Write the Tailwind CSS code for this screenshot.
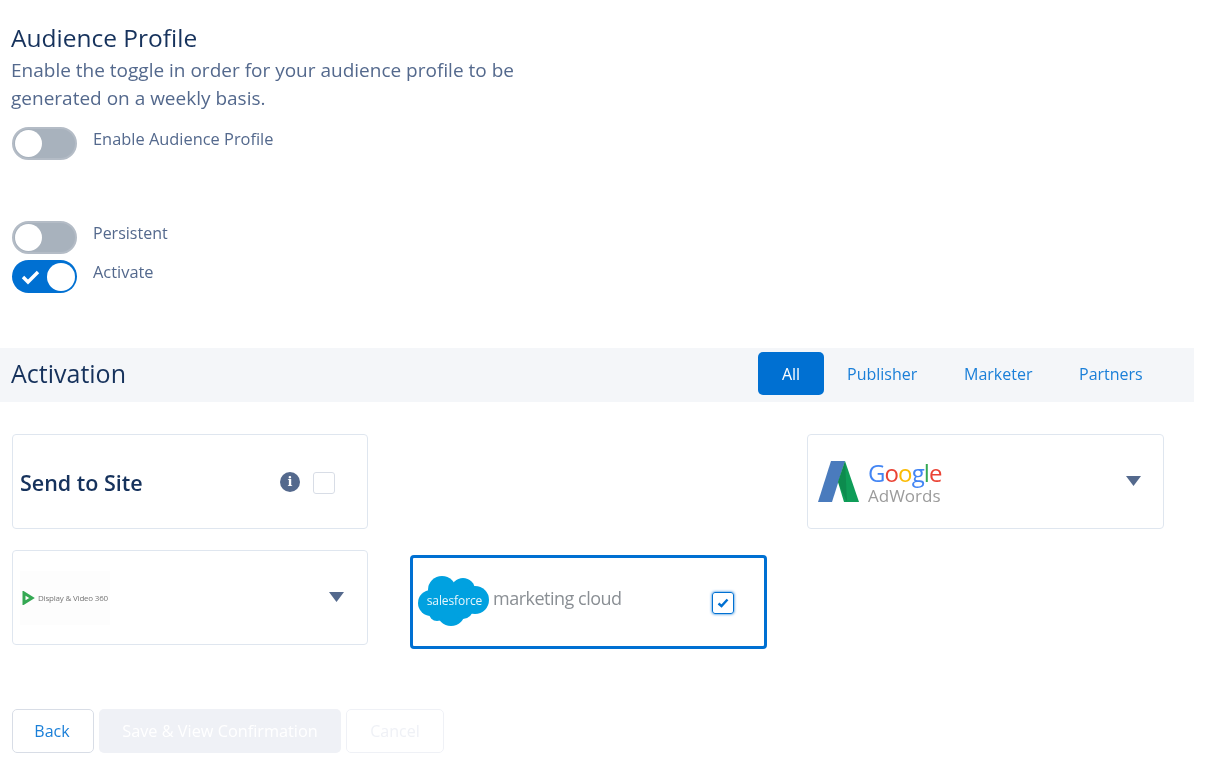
<!DOCTYPE html>
<html>
<head>
<meta charset="utf-8">
<script src="https://cdn.jsdelivr.net/npm/@tailwindcss/browser@4"></script>
</head>
<body class="bg-white font-['Open_Sans',sans-serif] text-[#54698d]">
<div class="w-[1206px] h-[764px] overflow-hidden blur-[0.4px]">
  <div class="pl-3 pt-[23px] h-[348px]">
    <h1 class="text-[24.5px] leading-[30px] text-[#16325c] -ml-[1px]">Audience Profile</h1>
    <p class="w-[530px] mt-[3px] text-[19px] leading-[28px] -ml-[1px]">Enable the toggle in order for your audience profile to be generated on a weekly basis.</p>
    <div class="flex gap-[16px] mt-[15px] h-[33px]">
      <div class="w-[65px] h-[33px] rounded-full bg-[#a8b2bd] border-2 border-[#b4bcc6] flex items-center pl-[1px]"><span class="w-[27px] h-[27px] rounded-full bg-white"></span></div>
      <span class="text-[16.4px] leading-[24px]">Enable Audience Profile</span>
    </div>
    <div class="flex gap-[16px] mt-[61px] h-[33px]">
      <div class="w-[65px] h-[33px] rounded-full bg-[#a8b2bd] border-2 border-[#b4bcc6] flex items-center pl-[1px]"><span class="w-[27px] h-[27px] rounded-full bg-white"></span></div>
      <span class="text-[16px] leading-[24px]">Persistent</span>
    </div>
    <div class="flex gap-[16px] mt-[6px] h-[33px]">
      <div class="w-[65px] h-[33px] rounded-full bg-[#0070d2] flex items-center justify-between pl-[9px] pr-[2px]">
        <svg width="19" height="16" viewBox="0 0 19 16"><path d="M2 8l5 5L17 3" fill="none" stroke="#fff" stroke-width="3.4"/></svg>
        <span class="w-[28px] h-[28px] rounded-full bg-white"></span>
      </div>
      <span class="text-[16.4px] leading-[24px]">Activate</span>
    </div>
  </div>

  <div class="w-[1194px] h-[54px] bg-[#f4f6f9] flex items-center pl-3 pr-[52px]">
    <h2 class="text-[25px] text-[#16325c] flex-1 -ml-[1px] -mt-[2px]">Activation</h2>
    <div class="flex items-center text-[16px] text-[#1a7fd8] -mt-[3px]">
      <span class="w-[66px] h-[43px] rounded-[5px] bg-[#0070d2] text-white flex items-center justify-center">All</span>
      <span class="ml-[23px] w-[71px]">Publisher</span>
      <span class="ml-[46px] w-[69px]">Marketer</span>
      <span class="ml-[46px] w-[63px]">Partners</span>
    </div>
  </div>

  <div class="grid grid-cols-[398px_397px_358px] pl-3 pt-8 items-start">
    <div class="w-[356px] h-[95px] border border-[#dfe6ef] rounded-[4px] flex items-center pl-[7px] pt-[3px]">
      <span class="text-[21.5px] font-semibold text-[#16325c] flex-1">Send to Site</span>
      <span class="w-5 h-5 rounded-full bg-[#54698d] text-white flex items-center justify-center text-[13px] font-black font-['DejaVu_Serif',serif] -mt-[2px]">i</span>
      <span class="w-[22px] h-[22px] rounded-[3px] border border-[#d8dde6] ml-[13px] mr-[32px]"></span>
    </div>
    <div></div>
    <div class="w-[357px] h-[95px] border border-[#dfe6ef] rounded-[4px] flex items-center pl-[10px] pr-[22px]">
      <svg width="42" height="44" viewBox="0 0 42 44" class="shrink-0"><path d="M13 1H27L14 42H0Z" fill="#4a7bbd"/><path d="M27 1L41 42H26L20 22Z" fill="#0f9d58"/><path d="M20 22L27 1L29 42Z" fill="#0b7a43" opacity=".5"/></svg>
      <div class="ml-[8px] flex-1 flex flex-col mt-[2px]">
        <span class="text-[24px] leading-[26px] tracking-[-0.9px]"><span class="text-[#4285f4]">G</span><span class="text-[#ea4335]">o</span><span class="text-[#fbbc05]">o</span><span class="text-[#4285f4]">g</span><span class="text-[#34a853]">l</span><span class="text-[#ea4335]">e</span></span>
        <span class="text-[17px] leading-[20px] text-[#9b9b9b]">AdWords</span>
      </div>
      <svg width="15" height="11" viewBox="0 0 15 11"><path d="M0 0H15L7.5 10Z" fill="#54698d"/></svg>
    </div>

    <div class="w-[356px] h-[95px] border border-[#dfe6ef] rounded-[4px] flex items-center pl-[7px] pr-[23px] mt-[21px]">
      <div class="flex-1 flex items-center">
        <div class="w-[90px] h-[54px] bg-[#fdfdfd] flex items-center pl-[2px]">
          <svg width="13" height="14" viewBox="0 0 13 14" class="shrink-0"><path d="M2 2L10 7L2 12Z" fill="none" stroke="#34a853" stroke-width="3"/></svg>
          <span class="ml-[3px] text-[8px] tracking-[-0.2px] text-[#777] whitespace-nowrap">Display &amp; Video 360</span>
        </div>
      </div>
      <svg width="15" height="11" viewBox="0 0 15 11"><path d="M0 0H15L7.5 10Z" fill="#54698d"/></svg>
    </div>
    <div class="w-[357px] h-[94px] border-[3px] border-[#0070d2] rounded-[4px] flex items-center pl-[4px] pr-[30px] mt-[26px]">
      <div class="relative w-[73px] h-[52px] shrink-0 -mt-[2px]">
        <svg width="73" height="52" viewBox="0 0 73 52" class="absolute inset-0"><g fill="#00a1e0"><circle cx="25" cy="15" r="14"/><circle cx="46" cy="15" r="12"/><circle cx="58" cy="25" r="14"/><circle cx="14" cy="28" r="13"/><circle cx="34" cy="37" r="14"/><circle cx="20" cy="38" r="8"/><circle cx="46" cy="34" r="10"/><rect x="16" y="14" width="38" height="24"/></g></svg>
        <span class="absolute inset-0 flex items-center justify-center text-[12px] text-white/90 tracking-[-0.1px] pl-[2px]">salesforce</span>
      </div>
      <span class="ml-[3px] -mt-[8px] flex-1 text-[18px] text-[#8a8f94] tracking-[-0.5px]">marketing cloud</span>
      <span class="w-[22px] h-[22px] mt-[2px] rounded-[3px] border border-[#0070d2] shadow-[0_0_3px_#0070d2] flex items-center justify-center">
        <svg width="12" height="10" viewBox="0 0 12 10"><path d="M1.5 5.5L4.5 8L10.5 1.5" fill="none" stroke="#0070d2" stroke-width="2.4"/></svg>
      </span>
    </div>
  </div>

  <div class="flex pl-3 gap-[5px] mt-[60px] text-[16px]">
    <span class="w-[82px] h-[44px] border border-[#d8dde6] rounded-[5px] flex items-center justify-center text-[#1a7fd8] pr-[2px]">Back</span>
    <span class="w-[242px] h-[44px] bg-[#eff1f6] rounded-[5px] flex items-center justify-center text-white text-[16.3px]">Save &amp; View Confirmation</span>
    <span class="w-[98px] h-[44px] border border-[#eff1f6] rounded-[5px] flex items-center justify-center text-[#eff1f6]">Cancel</span>
  </div>
</div>
</body>
</html>
